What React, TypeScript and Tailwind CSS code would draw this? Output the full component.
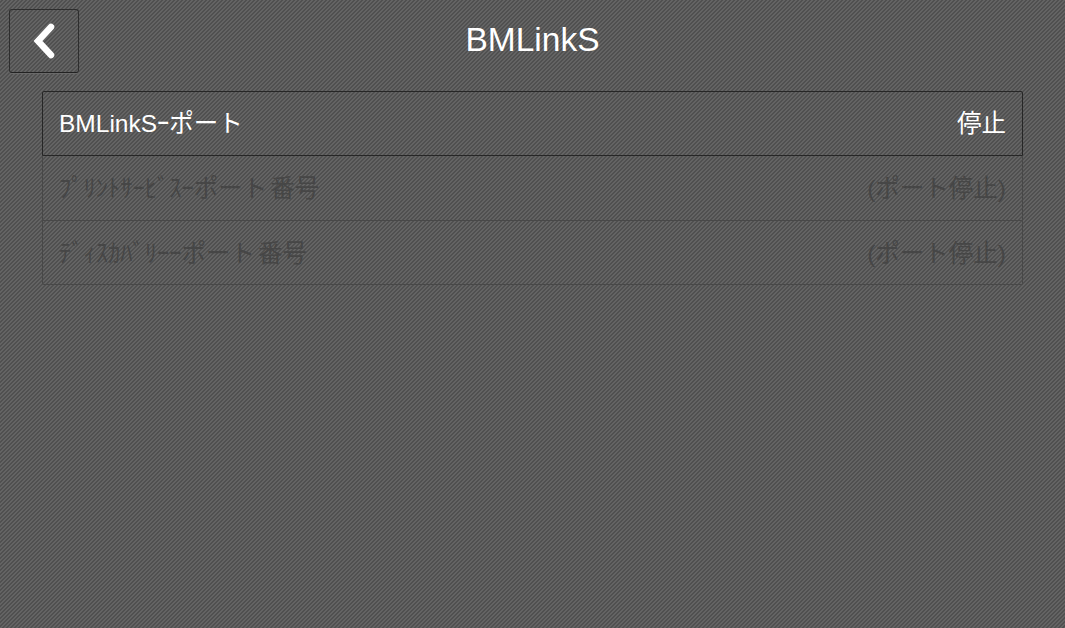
const font = "font-['Liberation_Sans','Noto_Sans_CJK_JP',sans-serif]";

const App = () => {
  return (
    <div
      className={`h-[628px] w-[1065px] overflow-hidden bg-[#585858] bg-[repeating-linear-gradient(135deg,#646464_0px,#646464_1.4142px,#505050_1.4142px,#505050_2.8284px)] ${font}`}
    >
      <header className="grid grid-cols-[1fr_auto_1fr] items-center pl-[9px] pt-[9px]">
        <button className="flex h-[64px] w-[70px] items-center justify-center rounded-[3px] border border-[#2e2e2e] border-b-[#222222] shadow-[0_1px_0_#6a6a6a]">
          <svg width="28" height="40" viewBox="0 0 28 40" fill="none" className="-ml-[2px] -mt-[1px]">
            <path d="M22 6 L9 20 L22 34" stroke="#ffffff" strokeWidth="6.5" strokeLinecap="round" strokeLinejoin="miter" />
          </svg>
        </button>
        <h1 className="-ml-[9px] -mt-[2px] text-[33.5px] font-normal leading-[40px] text-white">BMLinkS</h1>
        <div />
      </header>

      <div className="ml-[42px] mt-[18px] w-[981px]">
        <div className="flex h-[65px] items-center justify-between rounded-t-[2px] border border-[#262626] px-4 pt-[1px] text-[24.5px] leading-none text-white">
          <span>BMLinkSｰポート</span>
          <span>停止</span>
        </div>
        <div className="rounded-b-[2px] border-x border-b border-[#484848] text-[24.5px] leading-none text-[#464646]">
          <div className="flex h-[65px] items-center justify-between border-b border-[#484848] px-4 pt-[2px]">
            <span>
              ﾌﾟﾘﾝﾄｻｰﾋﾞｽｰポート<span className="ml-[3px]">番号</span>
            </span>
            <span>(ポート停止)</span>
          </div>
          <div className="flex h-[63px] items-center justify-between px-4 pt-[3px]">
            <span>
              ﾃﾞｨｽｶﾊﾞﾘｰｰポート<span className="ml-[3px]">番号</span>
            </span>
            <span>(ポート停止)</span>
          </div>
        </div>
      </div>
    </div>
  );
};

export default App;
